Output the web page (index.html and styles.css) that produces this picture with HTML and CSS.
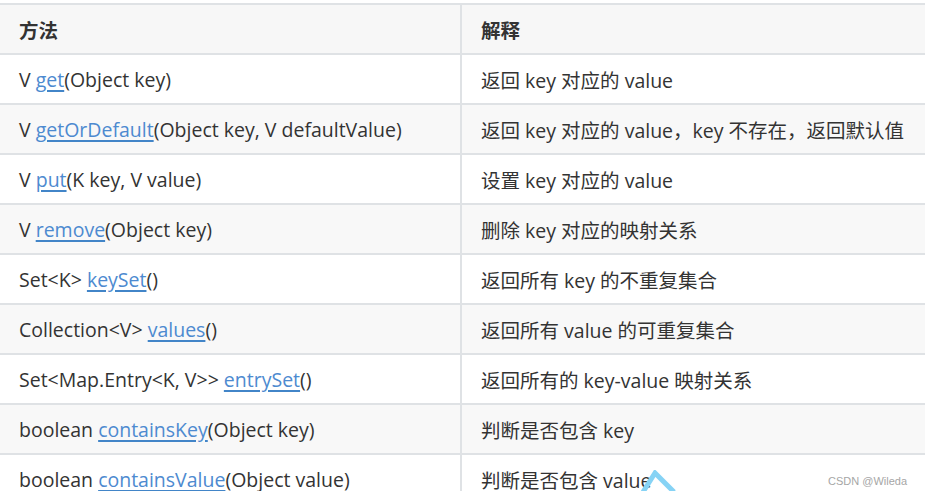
FILE: index.html
```html
<!DOCTYPE html>
<html lang="zh-CN">
<head>
<meta charset="utf-8">
<title>Map 方法</title>
<link rel="stylesheet" href="styles.css">
</head>
<body>
<div class="page">
  <table class="api">
    <thead>
      <tr><th class="c1">方法</th><th class="c2">解释</th></tr>
    </thead>
    <tbody>
      <tr><td class="c1">V <a href="#">get</a>(Object key)</td><td class="c2">返回 key 对应的 value</td></tr>
      <tr><td class="c1">V <a href="#">getOrDefault</a>(Object key, V defaultValue)</td><td class="c2">返回 key 对应的 value，key 不存在，返回默认值</td></tr>
      <tr><td class="c1">V <a href="#">put</a>(K key, V value)</td><td class="c2">设置 key 对应的 value</td></tr>
      <tr><td class="c1">V <a href="#">remove</a>(Object key)</td><td class="c2">删除 key 对应的映射关系</td></tr>
      <tr><td class="c1">Set&lt;K&gt; <a href="#">keySet</a>()</td><td class="c2">返回所有 key 的不重复集合</td></tr>
      <tr><td class="c1">Collection&lt;V&gt; <a href="#">values</a>()</td><td class="c2">返回所有 value 的可重复集合</td></tr>
      <tr><td class="c1">Set&lt;Map.Entry&lt;K, V&gt;&gt; <a href="#">entrySet</a>()</td><td class="c2">返回所有的 key-value 映射关系</td></tr>
      <tr><td class="c1">boolean <a href="#">containsKey</a>(Object key)</td><td class="c2">判断是否包含 key</td></tr>
      <tr><td class="c1">boolean <a href="#">containsValue</a>(Object value)</td><td class="c2">判断是否包含 value</td></tr>
    </tbody>
  </table>
  <svg class="arrow" width="40" height="24" viewBox="0 0 40 24" aria-hidden="true">
    <polyline points="3,22 15,3 34,22" fill="none" stroke="#86d3f5" stroke-width="5" stroke-linejoin="miter"/>
  </svg>
  <div class="mark">CSDN @Wileda</div>
</div>
</body>
</html>
```

FILE: styles.css
```css
html, body {
  margin: 0;
  padding: 0;
  background: #ffffff;
}

.page {
  position: relative;
  width: 925px;
  height: 491px;
  overflow: hidden;
  padding-top: 3px;
  box-sizing: border-box;
  font-family: "Open Sans", "Noto Sans CJK SC", sans-serif;
  font-size: 19.5px;
  color: #333333;
}

.api {
  border-collapse: separate;
  border-spacing: 0;
  border-top: 2px solid #dfe2e5;
  width: 1000px;
  table-layout: fixed;
}

.api th,
.api td {
  height: 48px;
  padding: 0 19px;
  border-bottom: 2px solid #dfe2e5;
  text-align: left;
  vertical-align: middle;
  white-space: nowrap;
  box-sizing: content-box;
}

.api .c1 {
  width: 422px;
  border-right: 2px solid #dfe2e5;
}

.api th {
  font-weight: 700;
  background: #f7f7f7;
}

.api tbody tr:nth-child(even) td {
  background: #f8f8f8;
}

.api a {
  color: #4d8ad0;
  text-decoration: underline;
  text-decoration-color: #4285c8;
  text-decoration-thickness: 2px;
  text-underline-offset: 3px;
}

.arrow {
  position: absolute;
  left: 640px;
  top: 470px;
}

.mark {
  position: absolute;
  right: 18px;
  bottom: 4px;
  font-family: "Liberation Sans", Arial, sans-serif;
  font-size: 11px;
  color: #a6a6a6;
}
```
